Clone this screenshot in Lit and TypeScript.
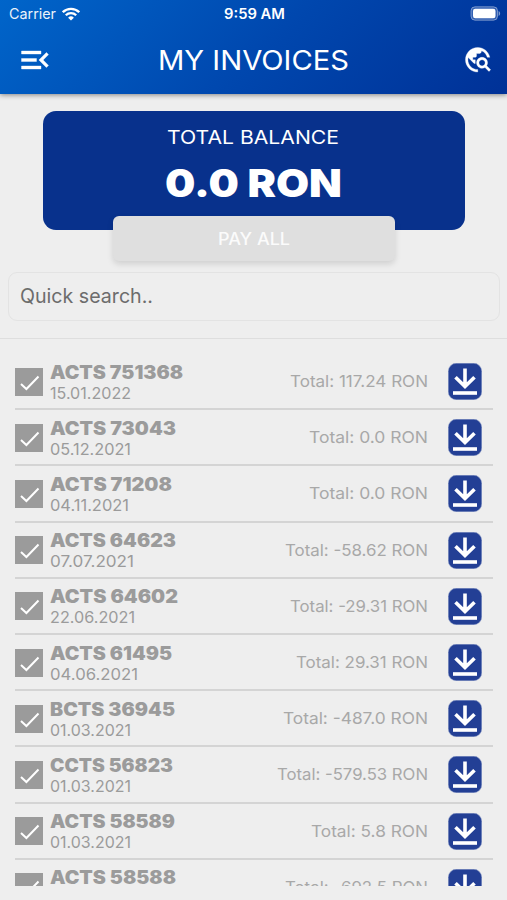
import { LitElement, html, css, svg } from "lit";
import { customElement } from "lit/decorators.js";

interface Invoice {
  name: string;
  nameWidth: number;
  date: string;
  dateWidth: number;
  total: string;
  totalWidth: number;
}

const row = (name: string, nameWidth: number, date: string, dateWidth: number, total: string, totalWidth: number): Invoice => ({
  name, nameWidth, date, dateWidth, total, totalWidth,
});

const invoices: Invoice[] = [
  row("ACTS 751368", 133, "15.01.2022", 81, "117.24", 138),
  row("ACTS 73043", 126, "05.12.2021", 81, "0.0", 119),
  row("ACTS 71208", 122, "04.11.2021", 79, "0.0", 119),
  row("ACTS 64623", 126, "07.07.2021", 84, "-58.62", 143),
  row("ACTS 64602", 128, "22.06.2021", 85, "-29.31", 138),
  row("ACTS 61495", 122, "04.06.2021", 88, "29.31", 132),
  row("BCTS 36945", 125, "01.03.2021", 81, "-487.0", 145),
  row("CCTS 56823", 123, "01.03.2021", 81, "-579.53", 151),
  row("ACTS 58589", 125, "01.03.2021", 81, "5.8", 117),
  row("ACTS 58588", 126, "01.03.2021", 81, "-692.5", 143),
];

/* One line of type set to a fixed measure. The baseline is the bottom edge of the box. */
const line = (text: string, width: number, height: number, cls: string) => html`
  <svg class="line ${cls}" width=${width} height=${height}>
    ${svg`<text x="-1" y=${height} textLength=${width} lengthAdjust="spacingAndGlyphs">${text}</text>`}
  </svg>`;

@customElement("app-root")
export class AppRoot extends LitElement {
  static styles = css`
    :host {
      display: flex;
      flex-direction: column;
      height: 900px;
      background: #eeeeee;
      font-family: Inter, "Liberation Sans", sans-serif;
      overflow: hidden;
    }
    svg { display: block; flex: none; }
    .line { overflow: visible; fill: currentColor; }
    header {
      position: relative;
      flex: none;
      height: 94px;
      color: #fff;
      background: linear-gradient(135deg, #0065ca 0%, #0047ae 52%, #003197 100%);
      box-shadow: 0 1px 5px rgba(0, 0, 0, 0.45);
    }
    .status {
      display: grid;
      grid-template-columns: 1fr auto 1fr;
      height: 27px;
      align-items: center;
      padding: 0 6px 0 10px;
      box-sizing: border-box;
    }
    .carrier { display: flex; gap: 5px; align-items: center; }
    .battery { justify-self: end; }
    .small { font-size: 14.5px; opacity: 0.92; }
    .clock { font-size: 14.5px; font-weight: 600; }
    .bar {
      display: grid;
      grid-template-columns: 1fr auto 1fr;
      align-items: center;
      height: 66px;
      padding: 0 15px 0 17px;
    }
    .globe { justify-self: end; }
    .title { font-size: 27px; }
    .balance {
      flex: none;
      display: flex;
      flex-direction: column;
      align-items: center;
      height: 119px;
      margin: 17px 42px 0 43px;
      padding-top: 19px;
      box-sizing: border-box;
      border-radius: 13px;
      background: #08318c;
      color: #fff;
    }
    .label { font-size: 18.6px; }
    .amount { font-size: 38.5px; font-weight: 900; margin-top: 25px; }
    .pay {
      flex: none;
      align-self: center;
      display: flex;
      justify-content: center;
      width: 282px;
      height: 45px;
      margin-top: -14px;
      padding: 16px 0 0 2px;
      box-sizing: border-box;
      border: 0;
      border-radius: 6px;
      background: #dfdfdf;
      color: #fbfbfb;
      font-family: inherit;
      box-shadow: 0 3px 6px rgba(0, 0, 0, 0.13);
    }
    .pay .line { font-size: 16.8px; font-weight: 500; }
    .search {
      flex: none;
      height: 49px;
      margin: 11px 7px 0 8px;
      padding: 16px 0 0 12px;
      box-sizing: border-box;
      border: 1px solid #e3e3e3;
      border-radius: 9px;
      color: #6c6c6c;
    }
    .search .line { font-size: 20px; }
    .list {
      flex: none;
      height: 548px;
      margin-top: 17px;
      padding: 15px 14px 0 15px;
      box-sizing: border-box;
      border-top: 1px solid #dedede;
      overflow: hidden;
    }
    .item {
      display: flex;
      align-items: center;
      height: 56.2px;
      padding: 1px 11px 0 0;
      box-sizing: border-box;
      border-bottom: 2px solid #d4d4d4;
      color: #9b9b9b;
    }
    .names { flex: 1; display: flex; flex-direction: column; gap: 6px; padding-left: 8px; }
    .name { font-size: 18.2px; font-weight: 900; }
    .date { font-size: 16.2px; }
    .total { font-size: 16.4px; color: #a8a8a8; margin-right: 19px; margin-top: -1px; }
  `;

  private item(i: Invoice) {
    return html`<div class="item">
      <svg width="28" height="28" viewBox="0 0 28 28">
        <rect width="28" height="28" fill="#9b9b9b" />
        <path d="M6 16l5.4 5L23.5 8.500" fill="none" stroke="#fff" stroke-width="2" />
      </svg>
      <div class="names">
        ${line(i.name, i.nameWidth, 14, "name")}
        ${line(i.date, i.dateWidth, 14, "date")}
      </div>
      ${line(`Total: ${i.total} RON`, i.totalWidth, 12, "total")}
      <svg width="34" height="37" viewBox="0 0 34 37">
        <rect x=".3" y=".3" width="33.400" height="36.400" rx="8" fill="#233f95" stroke="#8292c2" stroke-width=".6" />
        <path d="M17 5.500v18M7.500 14.200l9.500 9.300 9.500-9.300" fill="none" stroke="#fff" stroke-width="3.600" />
        <path d="M5 30h24" stroke="#fff" stroke-width="3.600" />
      </svg>
    </div>`;
  }

  render() {
    return html`
      <header>
        <div class="status">
          <div class="carrier">
            ${line("Carrier", 47, 11, "small")}
            <svg width="18" height="14" viewBox="0 0 18 14">
              <g fill="none" stroke="#fff" stroke-width="2.300">
                <path d="M.8 5.200a11.600 11.600 0 0 1 16.400 0" />
                <path d="M3.800 8.300a7.400 7.400 0 0 1 10.400 0" />
              </g>
              <path d="M6.100 10.700a4.100 4.100 0 0 1 5.800 0L9 13.600z" fill="#fff" />
            </svg>
          </div>
          ${line("9:59 AM", 61, 11, "clock")}
          <svg class="battery" width="31" height="15" viewBox="0 0 31 15">
            <rect x="1" y=".8" width="26.500" height="13.400" rx="4" fill="#fff" fill-opacity=".2" stroke="#fff" stroke-opacity=".4" />
            <rect x="3" y="2.800" width="22.500" height="9.400" rx="2.300" fill="#fff" />
            <path d="M28.600 5c2 .8 2 4.200 0 5z" fill="#fff" fill-opacity=".5" />
          </svg>
        </div>
        <div class="bar">
          <svg width="36" height="36" viewBox="0 0 24 24" fill="#fff" stroke="#fff" stroke-width=".25">
            <path d="M3 18h13v-2H3v2zM3 6v2h13V6H3zm0 7h10v-2H3v2zm18 2.590L17.420 12 21 8.410 19.590 7l-5 5 5 5L21 15.590z" />
          </svg>
          ${line("MY INVOICES", 191, 20, "title")}
          <svg class="globe" width="29.500" height="29.500" viewBox="0 0 24 24" fill="#fff" stroke="#fff" stroke-width=".25">
            <path d="M19.300 16.900c.4-.7.7-1.500.7-2.400 0-2.500-2-4.500-4.500-4.500S11 12 11 14.500s2 4.500 4.500 4.500c.9 0 1.700-.3 2.400-.7l3.200 3.200 1.400-1.400-3.200-3.200zm-3.800.1c-1.400 0-2.500-1.100-2.500-2.500s1.100-2.500 2.500-2.500 2.500 1.100 2.500 2.500-1.100 2.500-2.500 2.500zM12 20v2C6.480 22 2 17.520 2 12S6.480 2 12 2c4.840 0 8.870 3.440 9.800 8h-2.070c-.64-2.460-2.400-4.470-4.730-5.410V5c0 1.100-.9 2-2 2h-2v2c0 .55-.45 1-1 1H8v2h2v3H9l-4.790-4.790C4.080 10.790 4 11.380 4 12c0 4.410 3.590 8 8 8z" />
          </svg>
        </div>
      </header>
      <section class="balance">
        ${line("TOTAL BALANCE", 172, 14, "label")}
        ${line("0.0 RON", 177, 28, "amount")}
      </section>
      <button class="pay">${line("PAY ALL", 72, 13, "")}</button>
      <div class="search">${line("Quick search..", 133, 14, "")}</div>
      <main class="list">${invoices.map((i) => this.item(i))}</main>
    `;
  }
}
